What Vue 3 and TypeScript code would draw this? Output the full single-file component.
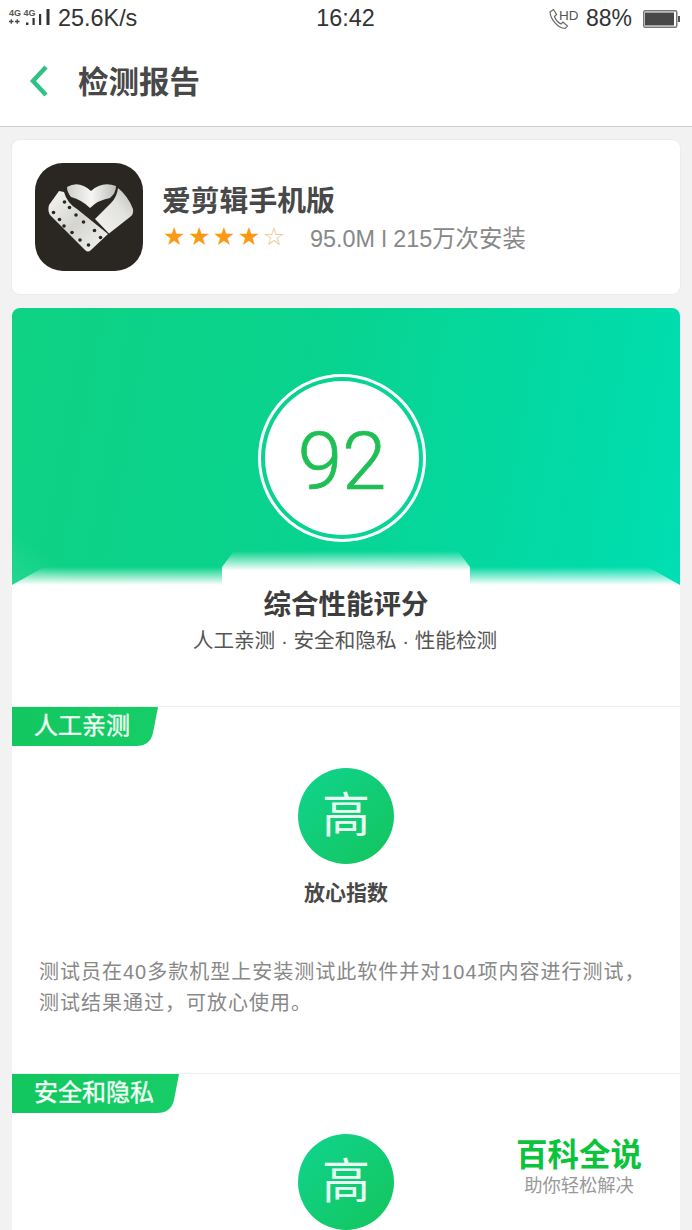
<script setup lang="ts">
const dotsA: [number, number][] = [[29.5,39],[34.5,44.5],[41,52],[48.5,59],[59.5,67.5],[65.5,74.5]]
const dotsB: [number, number][] = [[18.5,49.5],[24.5,56.5],[29,63],[37,69.5],[45,77],[53.5,82]]
</script>

<template>
  <div class="page">
    <header class="status">
      <div class="status-left">
        <svg class="net" width="42" height="18" viewBox="0 0 42 18">
          <text x="0" y="6.500" class="net-text">4G</text>
          <text x="14.500" y="6.500" class="net-text">4G</text>
          <path d="M0 12.500h4.500M2.250 10.300v4.400M6 12.500h4.500M8.250 10.300v4.400" stroke="#444" stroke-width="1.300" />
          <rect x="17" y="13.500" width="2.400" height="2.500" fill="#333" />
          <rect x="23.500" y="9" width="2.200" height="7" fill="#333" />
          <rect x="30" y="5" width="2.200" height="11" fill="#333" />
          <rect x="37.500" y="0" width="3" height="16" fill="#333" />
        </svg>
        <span class="speed">25.6K/s</span>
      </div>
      <span class="clock">16:42</span>
      <div class="status-right">
        <svg class="call" width="30" height="24" viewBox="0 0 30 24">
          <path d="M2 5 L5.500 2.500 L8.500 7.500 L6.500 9.500 C7.500 12.500 10 15.500 13 17 L15 15 L19.500 19 L17 21.500 C10 21 2.500 12.500 2 5Z" fill="none" stroke="#666" stroke-width="1.200" />
          <text x="11" y="13" class="hd">HD</text>
        </svg>
        <span class="pct">88%</span>
        <svg class="battery" width="37" height="18" viewBox="0 0 37 18">
          <rect x="0.750" y="0.750" width="33" height="16.500" rx="1.500" fill="#fff" stroke="#777" stroke-width="1.500" />
          <rect x="2" y="2.500" width="29" height="13" fill="#484848" />
          <rect x="35" y="6" width="2" height="6" fill="#555" />
        </svg>
      </div>
    </header>

    <nav class="nav">
      <svg class="back" width="20" height="34" viewBox="0 0 20 34">
        <path d="M17 3 L4 17 L17 31" fill="none" stroke="#2fc285" stroke-width="4.500" />
      </svg>
      <h1>检测报告</h1>
    </nav>

    <main class="content">
      <section class="app-card">
        <svg class="logo" width="108" height="108" viewBox="0 0 108 108">
          <defs>
            <linearGradient id="silver" x1="0" y1="0" x2="1" y2="1">
              <stop offset="0" stop-color="#f6f6f4" />
              <stop offset="0.5" stop-color="#d4d4d1" />
              <stop offset="1" stop-color="#f4f4f2" />
            </linearGradient>
            <linearGradient id="silver2" x1="0" y1="1" x2="1" y2="0">
              <stop offset="0" stop-color="#f4f4f2" />
              <stop offset="0.6" stop-color="#e2e2df" />
              <stop offset="1" stop-color="#b9b9b6" />
            </linearGradient>
            <linearGradient id="silver3" x1="0" y1="0" x2="1" y2="0">
              <stop offset="0" stop-color="#cfcfcc" />
              <stop offset="0.5" stop-color="#f6f6f4" />
              <stop offset="1" stop-color="#bdbdba" />
            </linearGradient>
          </defs>
          <rect width="108" height="108" rx="28" fill="#2a2622" />
          <path d="M32 24 Q44 17 56 28 Q67 18 81 23 Q81 30 75 35 Q63 37 55 45 Q47 37 36 34 Q32 29 32 24Z" fill="url(#silver3)" />
          <path d="M83 25 Q93 33 98 46 Q99 51 95 54 L74 70.500 L60 56 L76 40 Q82 34 83 25Z" fill="url(#silver2)" />
          <path d="M24 28 L14 42 Q12 49 16 53 L50 87 Q53 90 56 87 L73 71 L42 46 Q32 40 29 29Z" fill="url(#silver)" />
          <circle v-for="(d, i) in [...dotsA, ...dotsB]" :key="i" :cx="d[0]" :cy="d[1]" r="1.800" fill="#2a2622" />
        </svg>
        <div class="app-info">
          <h2>爱剪辑手机版</h2>
          <div class="app-meta">
            <span class="stars">★★★★<i>☆</i></span>
            <span class="meta">95.0M l 215万次安装</span>
          </div>
        </div>
      </section>

      <section class="report">
        <div class="hero">
          <div class="ring"><div class="disc">92</div></div>
          <div class="fade-wide"></div>
          <div class="fade-tab"></div>
        </div>
        <div class="summary">
          <h2>综合性能评分</h2>
          <p>人工亲测 · 安全和隐私 · 性能检测</p>
        </div>

        <div class="block block-first">
          <div class="tag tag-short">人工亲测</div>
          <div class="badge">高</div>
          <h3>放心指数</h3>
          <p class="desc">测试员在40多款机型上安装测试此软件并对104项内容进行测试，<br />测试结果通过，可放心使用。</p>
        </div>

        <div class="block">
          <div class="tag tag-long">安全和隐私</div>
          <div class="badge">高</div>
        </div>
      </section>
    </main>

    <aside class="mark">
      <strong>百科全说</strong>
      <span>助你轻松解决</span>
    </aside>
  </div>
</template>

<style>
html, body { margin: 0; padding: 0; background: #f2f2f2; }
</style>

<style scoped>
* { box-sizing: border-box; }
.page {
  position: relative;
  width: 692px;
  height: 1230px;
  overflow: hidden;
  background: #f2f2f2;
  font-family: "Liberation Sans", "Noto Sans CJK SC", sans-serif;
}
h1, h2, h3, p { margin: 0; }

.status {
  height: 36px;
  background: #fff;
  display: grid;
  grid-template-columns: 1fr auto 1fr;
  align-items: center;
  padding: 1px 12px 0 9px;
  color: #333;
}
.status-left { display: flex; align-items: center; }
.net { margin-top: -1px; }
.net-text { font-size: 9px; font-weight: 700; fill: #555; font-family: "Liberation Sans", sans-serif; }
.speed { margin-left: 7px; font-size: 23.400px; }
.clock { padding-left: 2px; font-size: 23.400px; }
.status-right { display: flex; align-items: center; justify-content: flex-end; }
.call { margin-right: 8px; }
.hd { font-size: 13.500px; fill: #555; font-family: "Liberation Sans", sans-serif; }
.pct { font-size: 23px; margin-right: 11px; }

.nav {
  height: 91px;
  background: #fff;
  border-bottom: 1px solid #ccc;
  display: flex;
  align-items: center;
  padding: 0 0 0 29px;
}
.nav h1 {
  margin: -2px 0 0 29px;
  font-size: 30.500px;
  font-weight: 700;
  color: #484848;
}

.content {
  padding: 13px 12px 0;
  display: flex;
  flex-direction: column;
  gap: 14px;
}

.app-card {
  height: 154px;
  background: #fff;
  border-radius: 8px;
  box-shadow: 0 0 0 1px #ececec;
  display: flex;
  align-items: center;
  padding-left: 23px;
}
.app-info { margin-left: 20px; margin-top: 2px; }
.app-info h2 {
  margin-left: -1px;
  font-size: 28.800px;
  line-height: 36px;
  font-weight: 700;
  color: #484848;
}
.app-meta { display: flex; align-items: center; margin-top: 2px; height: 32px; }
.stars {
  width: 147px;
  font-size: 25px;
  letter-spacing: 2.500px;
  line-height: 32px;
  color: #fb9a12;
  font-family: "DejaVu Sans", sans-serif;
  white-space: nowrap;
}
.stars i { font-style: normal; color: #e9c58a; }
.meta { font-size: 23.400px; color: #888; white-space: nowrap; }

.report {
  background: #fff;
  border-radius: 8px 8px 0 0;
  overflow: hidden;
}
.hero {
  position: relative;
  height: 277px;
  padding-top: 66px;
  display: flex;
  justify-content: center;
  background:
    linear-gradient(40deg, rgba(255,255,255,0.1) 0, rgba(255,255,255,0) 46px),
    linear-gradient(100deg, #0fd283 0%, #08d38f 45%, #00deb2 100%);
}
.ring {
  width: 168px;
  height: 168px;
  margin-left: -8px;
  border: 3px solid #fff;
  border-radius: 50%;
  padding: 4px;
}
.disc {
  height: 100%;
  border-radius: 50%;
  background: #fff;
  color: #20bf55;
  font-family: Roboto, "Liberation Sans", sans-serif;
  font-weight: 300;
  font-size: 80px;
  -webkit-text-stroke: 0.700px #20bf55;
  padding-top: 7px;
  display: flex;
  align-items: center;
  justify-content: center;
}
.fade-wide {
  position: absolute;
  left: 0;
  right: 0;
  bottom: 0;
  height: 18px;
  background: linear-gradient(to bottom, rgba(255,255,255,0), #fff);
  clip-path: polygon(0 100%, 32px 0, calc(100% - 32px) 0, 100% 100%);
}
.fade-tab {
  position: absolute;
  left: 210px;
  width: 248px;
  bottom: 0;
  height: 34px;
  background: linear-gradient(to bottom, rgba(255,255,255,0), #fff 58%);
  clip-path: polygon(0 100%, 0 16px, 12px 0, calc(100% - 12px) 0, 100% 16px, 100% 100%);
}

.summary { height: 121px; text-align: center; }
.summary h2 {
  padding-top: 2px;
  font-size: 27.500px;
  line-height: 36px;
  font-weight: 700;
  color: #3d3d3d;
}
.summary p {
  margin-top: 3px;
  padding-right: 2px;
  font-size: 20.600px;
  line-height: 30px;
  color: #555;
}

.block {
  position: relative;
  border-top: 1px solid #eee;
  display: flex;
  flex-direction: column;
  align-items: center;
}
.block-first { height: 367px; padding-top: 1px; }
.tag {
  position: absolute;
  left: 0;
  top: 0;
  height: 39px;
  color: #f4fff8;
  font-size: 24px;
  line-height: 38px;
  padding-left: 22px;
  -webkit-text-stroke: 0.400px #f4fff8;
  background: linear-gradient(90deg, #12c760, #17cd67);
}
.tag-short { width: 146px; clip-path: path("M0 0 H146 L141 26 Q138 39 124 39 H0Z"); }
.tag-long { width: 167px; clip-path: path("M0 0 H167 L162 26 Q159 39 145 39 H0Z"); }
.badge {
  width: 96px;
  height: 96px;
  margin-top: 60px;
  border-radius: 50%;
  background: linear-gradient(135deg, #0fd58f, #14c45c);
  color: #eafff3;
  font-size: 48px;
  line-height: 96px;
  text-align: center;
}
.block h3 {
  margin-top: 14px;
  font-size: 21px;
  line-height: 30px;
  font-weight: 700;
  color: #484848;
}
.desc {
  align-self: stretch;
  margin-top: 49px;
  padding-left: 27px;
  font-size: 20px;
  letter-spacing: 1px;
  line-height: 31px;
  color: #888;
  white-space: nowrap;
}

.mark {
  position: absolute;
  left: 500px;
  top: 1136px;
  width: 158px;
  height: 68px;
  display: flex;
  flex-direction: column;
  align-items: center;
  background: rgba(255,255,255,0.9);
}
.mark strong {
  font-size: 31.500px;
  line-height: 38px;
  color: #0cc33c;
  font-weight: 700;
}
.mark span {
  font-size: 18.300px;
  line-height: 24px;
  color: #999;
}
</style>
